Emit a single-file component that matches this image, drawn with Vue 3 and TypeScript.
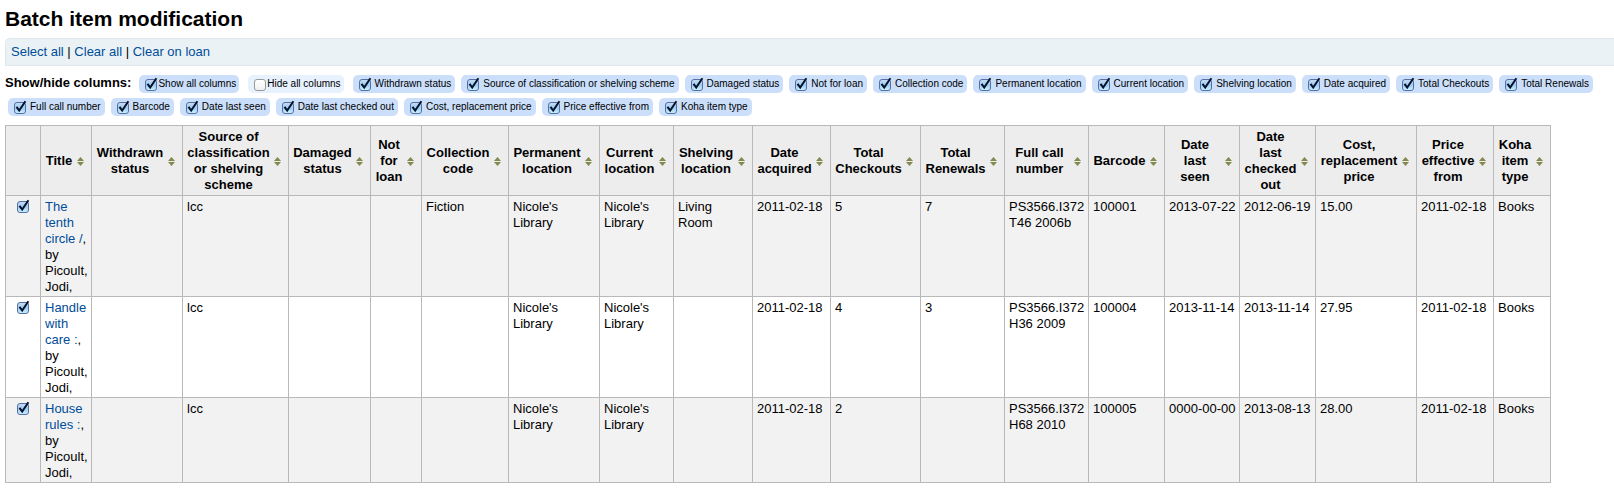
<script setup lang="ts">
import { computed, reactive, ref } from 'vue'

interface Column {
  key: string
  label: string
  width: number
}

interface Item {
  id: number
  title: string
  selected: boolean
  cells: Record<string, string>
}

const columns: Column[] = [
  { key: 'withdrawn', label: 'Withdrawn status', width: 91 },
  { key: 'source', label: 'Source of classification or shelving scheme', width: 106 },
  { key: 'damaged', label: 'Damaged status', width: 82 },
  { key: 'notforloan', label: 'Not for loan', width: 51 },
  { key: 'collection', label: 'Collection code', width: 87 },
  { key: 'permanent', label: 'Permanent location', width: 91 },
  { key: 'current', label: 'Current location', width: 74 },
  { key: 'shelving', label: 'Shelving location', width: 79 },
  { key: 'acquired', label: 'Date acquired', width: 78 },
  { key: 'checkouts', label: 'Total Checkouts', width: 90 },
  { key: 'renewals', label: 'Total Renewals', width: 84 },
  { key: 'callnumber', label: 'Full call number', width: 84 },
  { key: 'barcode', label: 'Barcode', width: 76 },
  { key: 'seen', label: 'Date last seen', width: 75 },
  { key: 'checkedout', label: 'Date last checked out', width: 76 },
  { key: 'cost', label: 'Cost, replacement price', width: 101 },
  { key: 'effective', label: 'Price effective from', width: 77 },
  { key: 'itemtype', label: 'Koha item type', width: 57 },
]

const shared = {
  source: 'lcc',
  permanent: "Nicole's Library",
  current: "Nicole's Library",
  acquired: '2011-02-18',
  effective: '2011-02-18',
  itemtype: 'Books',
}

const items = reactive<Item[]>([
  {
    id: 1,
    title: 'The tenth circle /',
    selected: true,
    cells: {
      ...shared,
      collection: 'Fiction',
      shelving: 'Living Room',
      checkouts: '5',
      renewals: '7',
      callnumber: 'PS3566.I372 T46 2006b',
      barcode: '100001',
      seen: '2013-07-22',
      checkedout: '2012-06-19',
      cost: '15.00',
    },
  },
  {
    id: 2,
    title: 'Handle with care :',
    selected: true,
    cells: {
      ...shared,
      checkouts: '4',
      renewals: '3',
      callnumber: 'PS3566.I372 H36 2009',
      barcode: '100004',
      seen: '2013-11-14',
      checkedout: '2013-11-14',
      cost: '27.95',
    },
  },
  {
    id: 3,
    title: 'House rules :',
    selected: true,
    cells: {
      ...shared,
      checkouts: '2',
      callnumber: 'PS3566.I372 H68 2010',
      barcode: '100005',
      seen: '0000-00-00',
      checkedout: '2013-08-13',
      cost: '28.00',
    },
  },
])

const shown = ref<string[]>(columns.map((c) => c.key))
const visible = computed(() => columns.filter((c) => shown.value.includes(c.key)))
const allShown = computed(() => shown.value.length === columns.length)
const noneShown = computed(() => shown.value.length === 0)

function showAll() {
  shown.value = columns.map((c) => c.key)
}
function hideAll() {
  shown.value = []
}
function selectAll(value: boolean) {
  items.forEach((item) => (item.selected = value))
}
</script>

<template>
  <main class="page">
    <h1>Batch item modification</h1>

    <nav class="toolbar">
      <a href="#" @click.prevent="selectAll(true)">Select all</a> |
      <a href="#" @click.prevent="selectAll(false)">Clear all</a> |
      <a href="#">Clear on loan</a>
    </nav>

    <div class="toggles" role="group" aria-labelledby="toggles-label">
      <strong id="toggles-label" class="toggles-label">Show/hide columns:</strong>
      <label class="chip on bulk">
        <span class="tick">
          <input type="checkbox" :checked="allShown" @change="showAll" />
          <svg viewBox="0 0 14 14"><path d="M3.5 6.8 6.2 10.6 12.4 1.2" /></svg>
        </span>
        Show all columns
      </label>
      <label class="chip bulk">
        <span class="tick">
          <input type="checkbox" :checked="noneShown" @change="hideAll" />
          <svg viewBox="0 0 14 14"><path d="M3.5 6.8 6.2 10.6 12.4 1.2" /></svg>
        </span>
        Hide all columns
      </label>
      <label v-for="c in columns" :key="c.key" class="chip" :class="{ on: shown.includes(c.key) }">
        <span class="tick">
          <input v-model="shown" type="checkbox" :value="c.key" />
          <svg viewBox="0 0 14 14"><path d="M3.5 6.8 6.2 10.6 12.4 1.2" /></svg>
        </span>
        {{ c.label }}
      </label>
    </div>

    <table>
      <colgroup>
        <col class="col-select" />
        <col class="col-title" />
        <col v-for="c in visible" :key="c.key" :style="{ width: c.width + 'px' }" />
      </colgroup>
      <thead>
        <tr>
          <th></th>
          <th scope="col">
            <button type="button" class="sort">
              <span>Title</span>
              <svg viewBox="0 0 7 9"><path d="M0 4 3.5 0 7 4ZM0 5H7L3.5 9Z" /></svg>
            </button>
          </th>
          <th v-for="c in visible" :key="c.key" scope="col">
            <button type="button" class="sort">
              <span>{{ c.label }}</span>
              <svg viewBox="0 0 7 9"><path d="M0 4 3.5 0 7 4ZM0 5H7L3.5 9Z" /></svg>
            </button>
          </th>
        </tr>
      </thead>
      <tbody>
        <tr v-for="item in items" :key="item.id">
          <td class="select">
            <span class="tick">
              <input v-model="item.selected" type="checkbox" :aria-label="item.title" />
              <svg viewBox="0 0 14 14"><path d="M3.5 6.8 6.2 10.6 12.4 1.2" /></svg>
            </span>
          </td>
          <td><a href="#">{{ item.title }}</a>, by Picoult, Jodi,</td>
          <td v-for="c in visible" :key="c.key" :class="{ date: /^\d{4}-/.test(item.cells[c.key] ?? '') }">
            {{ item.cells[c.key] }}
          </td>
        </tr>
      </tbody>
    </table>
  </main>
</template>

<style>
body {
  background: #fff;
}
</style>

<style scoped>
.page {
  padding: 7px 0 14px 5px;
  color: #000;
  font: 13px/16px "Liberation Sans", Arial, Helvetica, sans-serif;
}

h1 {
  margin: 0 0 7px;
  font-size: 21px;
  line-height: 24px;
}

a {
  color: #004d99;
  text-decoration: none;
}

.toolbar {
  padding: 5px;
  border: 1px solid #dfe9ed;
  border-width: 1px 0 1px 1px;
  border-radius: 5px 0 0 0;
  background: #eaf2f5;
}

.toggles {
  display: flex;
  flex-wrap: wrap;
  align-items: center;
  row-gap: 5px;
  margin: 9px 0;
}

.toggles-label {
  margin-right: 5px;
  padding-bottom: 2px;
}

.chip {
  display: flex;
  align-items: center;
  margin: 0 3px;
  padding: 1px 4px 1px 5px;
  border-radius: 5px;
  background: #e8f1fe;
  font-size: 10px;
  white-space: nowrap;
}

.chip.on {
  background: #cbdffb;
}

.chip .tick {
  margin-right: 3px;
}

.chip.bulk {
  margin-right: 6px;
  padding-right: 3px;
}

.chip.bulk .tick {
  margin-right: 0;
}

.tick {
  display: inline-grid;
  width: 14px;
  height: 14px;
}

.tick input,
.tick svg {
  grid-area: 1 / 1;
}

.tick input {
  appearance: none;
  box-sizing: border-box;
  width: 12px;
  height: 12px;
  margin: 2px 1px 0;
  border: 1px solid #999;
  border-radius: 3px;
  background: linear-gradient(#fff, #f0f0f0);
}

.tick input:checked {
  border-color: #5670a4;
  background: linear-gradient(#c5dcf5, #9dccf2 50%, #c9f0ff);
}

.tick svg {
  visibility: hidden;
  width: 14px;
  height: 14px;
  fill: none;
  stroke: #06122b;
  stroke-width: 2;
  pointer-events: none;
}

.tick input:checked + svg {
  visibility: visible;
}

table {
  border-collapse: collapse;
}

.col-select {
  width: 35px;
}

.col-title {
  width: 51px;
}

th,
td {
  border: 1px solid #b9b9b9;
}

th {
  padding: 3px 7px 2px 4px;
  background: #ededed;
  vertical-align: middle;
}

td {
  padding: 3px 3px 1px 4px;
  vertical-align: top;
}

tbody tr:nth-child(odd) {
  background: #f2f2f2;
}

.date {
  white-space: nowrap;
}

.select {
  padding-right: 5px;
  text-align: center;
}

.sort {
  display: flex;
  align-items: center;
  gap: 4px;
  width: 100%;
  padding: 0;
  border: 0;
  background: none;
  color: inherit;
  font: inherit;
  cursor: pointer;
}

.sort span {
  flex: 1;
  text-align: center;
}

.sort svg {
  flex: none;
  width: 7px;
  height: 9px;
  fill: #84884c;
}
</style>
